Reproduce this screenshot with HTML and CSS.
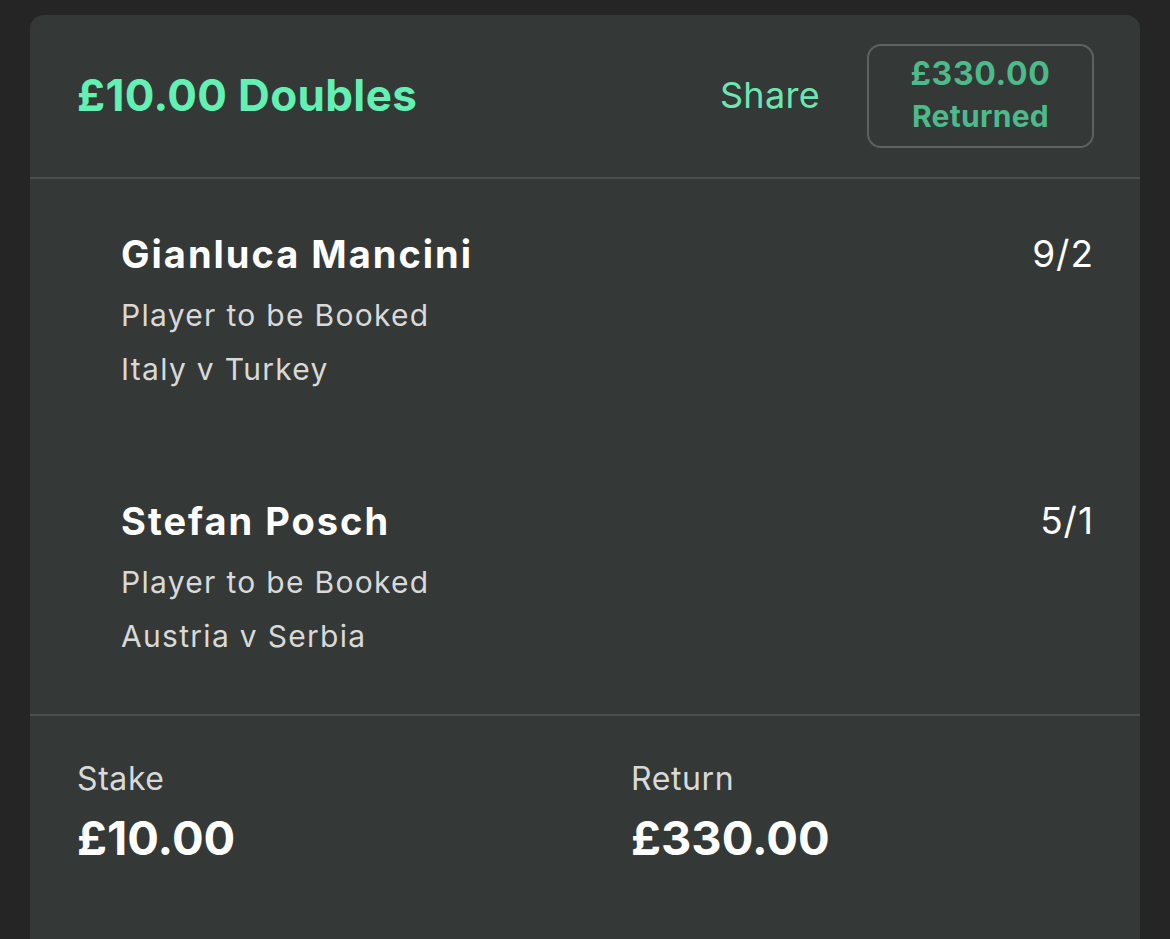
FILE: index.html
```html
<!DOCTYPE html>
<html>
<head>
<meta charset="utf-8">
<link rel="stylesheet" href="styles.css">
</head>
<body>
<div class="card">
  <div class="header">
    <div class="title">£10.00 Doubles</div>
    <div class="actions">
      <div class="share">Share</div>
      <div class="returned">
        <div class="ret-amount">£330.00</div>
        <div class="ret-label">Returned</div>
      </div>
    </div>
  </div>
  <div class="selections">
    <div class="sel">
      <div class="sel-info">
        <div class="sel-name">Gianluca Mancini</div>
        <div class="sel-market">Player to be Booked</div>
        <div class="sel-event">Italy v Turkey</div>
      </div>
      <div class="sel-odds">9/2</div>
    </div>
    <div class="sel">
      <div class="sel-info">
        <div class="sel-name">Stefan Posch</div>
        <div class="sel-market">Player to be Booked</div>
        <div class="sel-event">Austria v Serbia</div>
      </div>
      <div class="sel-odds">5/1</div>
    </div>
  </div>
  <div class="footer">
    <div class="stat">
      <div class="stat-label">Stake</div>
      <div class="stat-value">£10.00</div>
    </div>
    <div class="stat">
      <div class="stat-label">Return</div>
      <div class="stat-value">£330.00</div>
    </div>
  </div>
</div>
</body>
</html>
```

FILE: styles.css
```css
html, body {
  margin: 0;
  padding: 0;
  background: #252525;
  height: 100%;
  overflow: hidden;
}
body {
  padding: 15px 30px 0 30px;
  box-sizing: border-box;
  font-family: Inter, "Noto Sans", sans-serif;
}
.card {
  background: #343836;
  border-radius: 14px 14px 0 0;
  height: 960px;
}
.header {
  height: 164px;
  box-sizing: border-box;
  padding: 0 46px 0 47px;
  display: flex;
  align-items: center;
  justify-content: space-between;
  border-bottom: 2px solid #4a4f4d;
}
.title {
  color: #62f0b3;
  font-size: 44px;
  font-weight: 700;
  letter-spacing: 0.35px;
  margin-top: -3px;
}
.actions {
  display: flex;
  align-items: center;
  gap: 47px;
}
.share {
  color: #6de7b2;
  font-size: 36px;
  font-weight: 400;
  letter-spacing: 0.3px;
  margin-top: -2px;
}
.returned {
  width: 227px;
  height: 104px;
  box-sizing: border-box;
  border: 2px solid #5d6260;
  border-radius: 14px;
  display: flex;
  flex-direction: column;
  align-items: center;
  justify-content: center;
  color: #4dba8b;
  font-weight: 700;
}
.ret-amount {
  font-size: 32px;
  line-height: 42px;
  letter-spacing: 0.7px;
  margin-top: -2px;
}
.ret-label {
  font-size: 30px;
  line-height: 42px;
  letter-spacing: 0.3px;
}
.selections {
  height: 537px;
  box-sizing: border-box;
  padding: 49px 46px 0 91px;
  border-bottom: 2px solid #4a4f4d;
}
.sel {
  display: flex;
  justify-content: space-between;
  align-items: flex-start;
  height: 267px;
}
.sel-name {
  color: #ffffff;
  font-size: 38px;
  font-weight: 700;
  line-height: 52px;
  letter-spacing: 2px;
}
.sel-market, .sel-event {
  color: #d9d9d9;
  font-size: 30px;
  line-height: 54px;
  letter-spacing: 1.3px;
}
.sel-market {
  margin-top: 8px;
}
.sel-odds {
  color: #ffffff;
  font-size: 37px;
  line-height: 52px;
  letter-spacing: 1px;
}
.footer {
  display: grid;
  grid-template-columns: 554px 1fr;
  padding: 41px 47px 0 47px;
}
.stat-label {
  color: #d9d9d9;
  font-size: 32px;
  line-height: 44px;
  letter-spacing: 0.6px;
}
.stat-value {
  color: #ffffff;
  font-size: 47px;
  font-weight: 700;
  line-height: 70px;
  margin-top: 2px;
}
```
